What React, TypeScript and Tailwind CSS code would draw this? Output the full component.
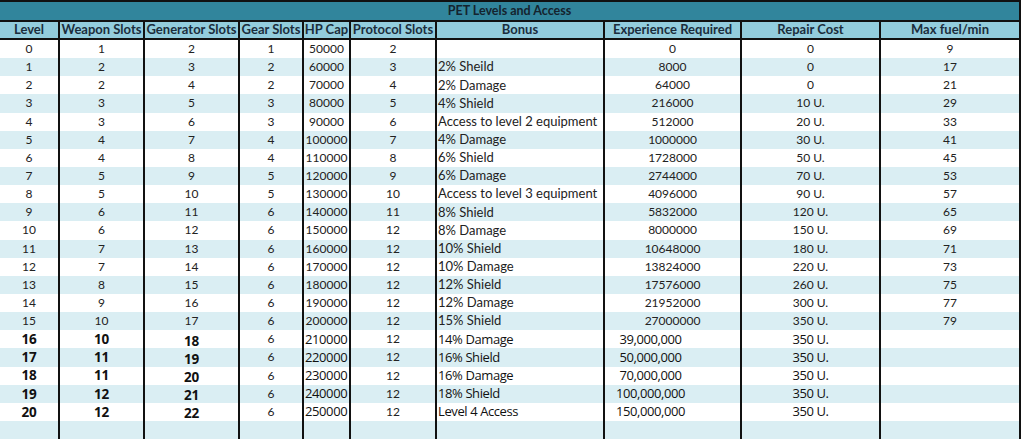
import React from "react";

type Row = {
  lv: string; w: string; g: string; gear: string; hp: string; p: string;
  bonus: string; exp: string; rep: string; fuel: string; big?: boolean;
};

const rows: Row[] = [
  { lv: "0", w: "1", g: "2", gear: "1", hp: "50000", p: "2", bonus: "", exp: "0", rep: "0", fuel: "9" },
  { lv: "1", w: "2", g: "3", gear: "2", hp: "60000", p: "3", bonus: "2% Sheild", exp: "8000", rep: "0", fuel: "17" },
  { lv: "2", w: "2", g: "4", gear: "2", hp: "70000", p: "4", bonus: "2% Damage", exp: "64000", rep: "0", fuel: "21" },
  { lv: "3", w: "3", g: "5", gear: "3", hp: "80000", p: "5", bonus: "4% Shield", exp: "216000", rep: "10 U.", fuel: "29" },
  { lv: "4", w: "3", g: "6", gear: "3", hp: "90000", p: "6", bonus: "Access to level 2 equipment", exp: "512000", rep: "20 U.", fuel: "33" },
  { lv: "5", w: "4", g: "7", gear: "4", hp: "100000", p: "7", bonus: "4% Damage", exp: "1000000", rep: "30 U.", fuel: "41" },
  { lv: "6", w: "4", g: "8", gear: "4", hp: "110000", p: "8", bonus: "6% Shield", exp: "1728000", rep: "50 U.", fuel: "45" },
  { lv: "7", w: "5", g: "9", gear: "5", hp: "120000", p: "9", bonus: "6% Damage", exp: "2744000", rep: "70 U.", fuel: "53" },
  { lv: "8", w: "5", g: "10", gear: "5", hp: "130000", p: "10", bonus: "Access to level 3 equipment", exp: "4096000", rep: "90 U.", fuel: "57" },
  { lv: "9", w: "6", g: "11", gear: "6", hp: "140000", p: "11", bonus: "8% Shield", exp: "5832000", rep: "120 U.", fuel: "65" },
  { lv: "10", w: "6", g: "12", gear: "6", hp: "150000", p: "12", bonus: "8% Damage", exp: "8000000", rep: "150 U.", fuel: "69" },
  { lv: "11", w: "7", g: "13", gear: "6", hp: "160000", p: "12", bonus: "10% Shield", exp: "10648000", rep: "180 U.", fuel: "71" },
  { lv: "12", w: "7", g: "14", gear: "6", hp: "170000", p: "12", bonus: "10% Damage", exp: "13824000", rep: "220 U.", fuel: "73" },
  { lv: "13", w: "8", g: "15", gear: "6", hp: "180000", p: "12", bonus: "12% Shield", exp: "17576000", rep: "260 U.", fuel: "75" },
  { lv: "14", w: "9", g: "16", gear: "6", hp: "190000", p: "12", bonus: "12% Damage", exp: "21952000", rep: "300 U.", fuel: "77" },
  { lv: "15", w: "10", g: "17", gear: "6", hp: "200000", p: "12", bonus: "15% Shield", exp: "27000000", rep: "350 U.", fuel: "79" },
  { lv: "16", w: "10", g: "18", gear: "6", hp: "210000", p: "12", bonus: "14% Damage", exp: "39,000,000", rep: "350 U.", fuel: "", big: true },
  { lv: "17", w: "11", g: "19", gear: "6", hp: "220000", p: "12", bonus: "16% Shield", exp: "50,000,000", rep: "350 U.", fuel: "", big: true },
  { lv: "18", w: "11", g: "20", gear: "6", hp: "230000", p: "12", bonus: "16% Damage", exp: "70,000,000", rep: "350 U.", fuel: "", big: true },
  { lv: "19", w: "12", g: "21", gear: "6", hp: "240000", p: "12", bonus: "18% Shield", exp: "100,000,000", rep: "350 U.", fuel: "", big: true },
  { lv: "20", w: "12", g: "22", gear: "6", hp: "250000", p: "12", bonus: "Level 4 Access", exp: "150,000,000", rep: "350 U.", fuel: "", big: true },
];

const widths = ["w-[60px]", "w-[85px]", "w-[95px]", "w-[64px]", "w-[47px]", "w-[86px]", "w-[168px]", "w-[137px]", "w-[139px]", "w-[140px]"];
const headers = ["Level", "Weapon Slots", "Generator Slots", "Gear Slots", "HP Cap", "Protocol Slots", "Bonus", "Experience Required", "Repair Cost", "Max fuel/min"];

const cellBase = "h-full shrink-0 border-r-2 border-[#111] flex items-center overflow-hidden whitespace-nowrap";
const num = "text-[12px] text-[#222]";

export default function App() {
  return (
    <div className="w-[1021px] h-[439px] bg-white overflow-hidden flex flex-col border-t-2 border-[#111] font-['Lato',sans-serif]">
      <div className="h-[18px] shrink-0 bg-[#31859c] border-r-2 border-[#111] flex items-center justify-center text-[12.5px] font-bold text-[#14232e]">
        PET Levels and Access
      </div>
      <div className="h-[20px] shrink-0 bg-[#93cddd] border-y-2 border-[#111] flex">
        {headers.map((h, i) => (
          <div key={h} className={`${cellBase} ${widths[i]} justify-center text-[13px] font-bold text-[#1b2d3c]`}>
            {h}
          </div>
        ))}
      </div>
      {rows.map((r, idx) => {
        const bg = idx % 2 === 0 ? "bg-white" : "bg-[#daeef3]";
        const big = !!r.big;
        const reg = big ? "text-[13px] text-[#111] font-['Open_Sans',sans-serif] tracking-[-0.4px]" : num;
        const bold = big ? "text-[13.5px] font-bold text-[#111] font-['Open_Sans',sans-serif] tracking-[-0.3px]" : num;
        const bonus = big ? reg : "text-[13px] text-[#222]";
        return (
          <div key={r.lv} className={`h-[18.15px] shrink-0 flex ${bg}`}>
            <div className={`${cellBase} ${widths[0]} justify-center ${bold}`}>{r.lv}</div>
            <div className={`${cellBase} ${widths[1]} justify-center ${bold}`}>{r.w}</div>
            <div className={`${cellBase} ${widths[2]} justify-center ${bold} ${big ? "pt-[3px]" : ""}`}>{r.g}</div>
            <div className={`${cellBase} ${widths[3]} justify-center ${num}`}>{r.gear}</div>
            <div className={`${cellBase} ${widths[4]} ${big ? "justify-start pl-[1px]" : "justify-center"} ${reg}`}>{r.hp}</div>
            <div className={`${cellBase} ${widths[5]} justify-center ${num}`}>{r.p}</div>
            <div className={`${cellBase} ${widths[6]} justify-start pl-[1px] ${bonus}`}>{r.bonus}</div>
            <div className={`${cellBase} ${widths[7]} justify-center ${reg} ${big ? "pr-[44px]" : ""}`}>{r.exp}</div>
            <div className={`${cellBase} ${widths[8]} justify-center ${reg}`}>{r.rep}</div>
            <div className={`${cellBase} ${widths[9]} justify-center ${num}`}>{r.fuel}</div>
          </div>
        );
      })}
      <div className="h-[18.15px] shrink-0 flex bg-[#daeef3]">
        {widths.map((w, i) => (
          <div key={i} className={`${cellBase} ${w}`} />
        ))}
      </div>
    </div>
  );
}
